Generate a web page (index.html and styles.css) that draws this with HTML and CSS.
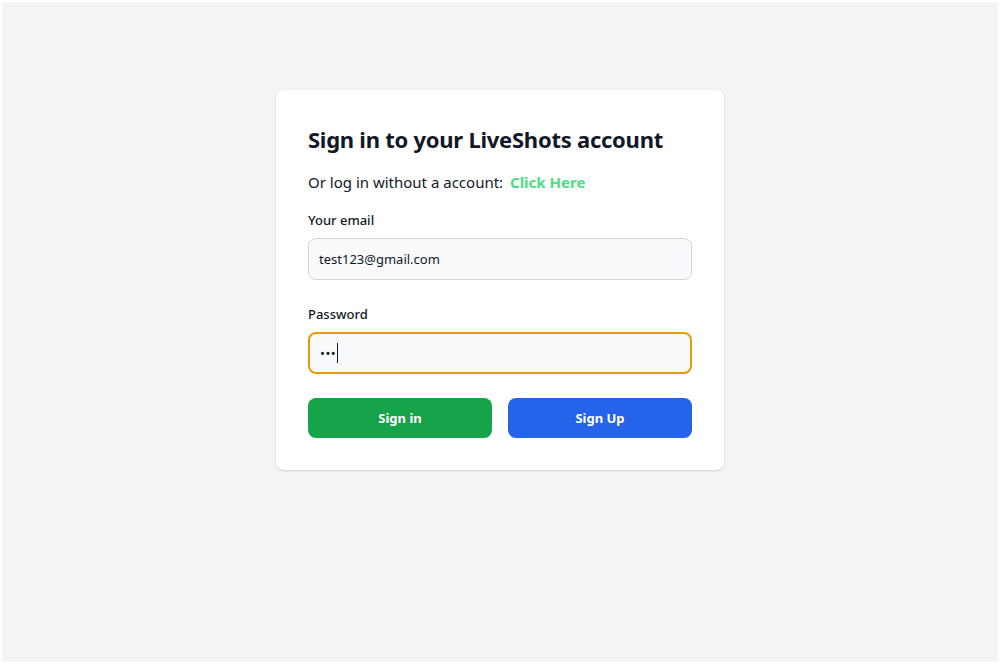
FILE: index.html
```html
<!DOCTYPE html>
<html lang="en">
<head>
<meta charset="utf-8">
<title>Sign in - LiveShots</title>
<link rel="stylesheet" href="styles.css">
</head>
<body>
<main class="page">
  <section class="card">
    <h1 class="title">Sign in to your LiveShots account</h1>
    <p class="guest">Or log in without a account: <a class="guest-link" href="#">Click Here</a></p>
    <form class="form">
      <div class="field">
        <label class="label" for="email">Your email</label>
        <input class="input" id="email" type="email" value="test123@gmail.com">
      </div>
      <div class="field">
        <label class="label" for="password">Password</label>
        <div class="input input-focus" id="password"><span class="dots">•••</span><span class="caret"></span></div>
      </div>
      <div class="actions">
        <button type="button" class="btn btn-green">Sign in</button>
        <button type="button" class="btn btn-blue">Sign Up</button>
      </div>
    </form>
  </section>
</main>
</body>
</html>
```

FILE: styles.css
```css
* { box-sizing: border-box; }
html, body { height: 100%; }
body {
  margin: 0;
  padding: 2px;
  background: #ffffff;
  font-family: "Noto Sans", "Open Sans", "Liberation Sans", sans-serif;
  color: #111827;
}
.page {
  height: 660px;
  background: #f3f4f6;
  display: flex;
  justify-content: center;
  align-items: flex-start;
  padding-top: 88px;
}
.card {
  width: 448px;
  background: #ffffff;
  border-radius: 8px;
  box-shadow: 0 1px 3px rgba(0,0,0,0.1), 0 1px 2px rgba(0,0,0,0.06);
  padding: 32px;
}
.title {
  margin: 0;
  padding-top: 2px;
  font-size: 22px;
  line-height: 30px;
  font-weight: 700;
  color: #111827;
  letter-spacing: -0.25px;
}
.guest {
  margin: 16px 0 0;
  font-size: 15px;
  line-height: 24px;
}
.guest-link {
  color: #4ade80;
  font-weight: 700;
  text-decoration: none;
  margin-left: 3px;
}
.form {
  margin-top: 16px;
  display: flex;
  flex-direction: column;
  gap: 24px;
}
.field { display: flex; flex-direction: column; }
.label {
  font-size: 13px;
  line-height: 20px;
  font-weight: 500;
  margin-bottom: 8px;
  color: #111827;
}
.input {
  height: 42px;
  width: 100%;
  border: 1px solid #d1d5db;
  border-radius: 8px;
  background: #f9fafb;
  padding: 0 10px;
  font-family: inherit;
  font-size: 13px;
  color: #111827;
  outline: none;
}
.input-focus {
  border: 2px solid #e5990c;
  padding: 0 10px;
  display: flex;
  align-items: center;
}
.dots {
  font-size: 13px;
  letter-spacing: 0.5px;
  color: #111827;
}
.caret {
  display: inline-block;
  width: 1px;
  height: 20px;
  background: #111827;
  margin-left: 1px;
}
.actions {
  display: grid;
  grid-template-columns: 1fr 1fr;
  gap: 16px;
}
.btn {
  height: 40px;
  border: none;
  border-radius: 8px;
  color: #ffffff;
  font-family: inherit;
  font-size: 13px;
  font-weight: 700;
  cursor: pointer;
}
.btn-green { background: #16a34a; }
.btn-blue { background: #2563eb; }
```
